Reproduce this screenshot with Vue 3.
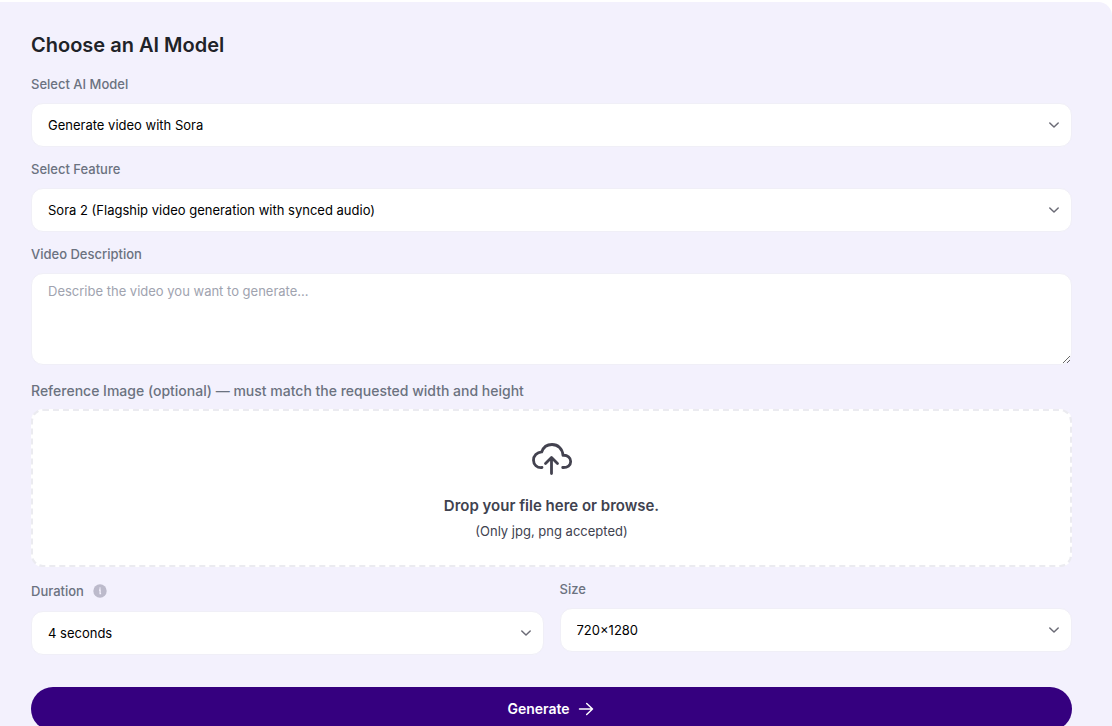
<script setup>
import { ref } from 'vue'

const model = ref('Generate video with Sora')
const feature = ref('Sora 2 (Flagship video generation with synced audio)')
const description = ref('')
const duration = ref('4 seconds')
const size = ref('720×1280')
</script>

<template>
  <main class="panel">
    <h1 class="title">Choose an AI Model</h1>
    <form class="form" @submit.prevent>
      <div class="field">
        <label class="label" for="model">Select AI Model</label>
        <div class="select-wrap">
          <select id="model" v-model="model" class="control">
            <option>Generate video with Sora</option>
          </select>
          <svg class="chevron" viewBox="0 0 12 12" aria-hidden="true"><path d="M1.8 4 6 8 10.2 4" /></svg>
        </div>
      </div>

      <div class="field">
        <label class="label" for="feature">Select Feature</label>
        <div class="select-wrap">
          <select id="feature" v-model="feature" class="control">
            <option>Sora 2 (Flagship video generation with synced audio)</option>
          </select>
          <svg class="chevron" viewBox="0 0 12 12" aria-hidden="true"><path d="M1.8 4 6 8 10.2 4" /></svg>
        </div>
      </div>

      <div class="field">
        <label class="label" for="description">Video Description</label>
        <textarea id="description" v-model="description" class="control area" placeholder="Describe the video you want to generate..."></textarea>
      </div>

      <div class="field upload">
        <label class="label large" for="file">Reference Image (optional) — must match the requested width and height</label>
        <label class="dropzone">
          <input id="file" class="file" type="file" accept=".jpg,.png" />
          <svg class="cloud" viewBox="0 0 42 34" aria-hidden="true">
            <path d="M11 25.500C6 26 2.500 22.600 2.500 18.200c0-4.500 3.300-8 8.200-8.300C12.400 5.200 16.200 2.500 21 2.500c6 0 10.500 4.200 11 10.800 4.500-.3 7.700 2.200 7.700 6.200 0 3.900-3.200 6.200-8 6" />
            <path d="M20.500 31.500V16M14.500 21.500l6-6 6 6" />
          </svg>
          <span class="drop-title">Drop your file here or browse.</span>
          <span class="drop-note">(Only jpg, png accepted)</span>
        </label>
      </div>

      <div class="row">
        <div class="field">
          <div class="label-line">
            <label class="label" for="duration">Duration</label>
            <svg class="info" viewBox="0 0 14 14" role="img" aria-label="Duration information">
              <circle cx="7" cy="7" r="6.700" fill="#bcbacb" />
              <path d="M6 6H7.100V9.700H8.100M7 3.500V4.700" fill="none" stroke="#f3f1fd" stroke-width="1.300" />
            </svg>
          </div>
          <div class="select-wrap">
            <select id="duration" v-model="duration" class="control">
              <option>4 seconds</option>
            </select>
            <svg class="chevron" viewBox="0 0 12 12" aria-hidden="true"><path d="M1.8 4 6 8 10.2 4" /></svg>
          </div>
        </div>
        <div class="field">
          <label class="label" for="size">Size</label>
          <div class="select-wrap">
            <select id="size" v-model="size" class="control">
              <option>720×1280</option>
            </select>
            <svg class="chevron" viewBox="0 0 12 12" aria-hidden="true"><path d="M1.8 4 6 8 10.2 4" /></svg>
          </div>
        </div>
      </div>

      <button class="generate" type="submit">
        Generate
        <svg class="arrow" viewBox="0 0 16 16" aria-hidden="true"><path d="M1.500 8H14.500M8.700 2.500 14.500 8 8.700 13.500" /></svg>
      </button>
    </form>
  </main>
</template>

<style>
body {
  margin: 0;
  background: #fff;
  overflow-x: hidden;
}
</style>

<style scoped>
* {
  box-sizing: border-box;
}

.panel {
  margin-top: 2px;
  padding: 28px 40px 32px 31px;
  background: #f3f1fd;
  border-radius: 0 14px 0 0;
  font-family: Inter, "Liberation Sans", sans-serif;
}

.title {
  margin: 0 0 14px;
  font-size: 20px;
  line-height: 30px;
  font-weight: 600;
  color: #1f2328;
}

.form,
.field {
  display: flex;
  flex-direction: column;
}

.form {
  gap: 12px;
}

.field {
  gap: 9px;
  min-width: 0;
}

.label {
  font-size: 13px;
  line-height: 20px;
  font-weight: 500;
  color: #6b7280;
}

.large {
  font-size: 14px;
}

.select-wrap {
  display: grid;
  align-items: center;
}

.select-wrap > * {
  grid-area: 1 / 1;
}

.control {
  width: 100%;
  height: 44px;
  margin: 0;
  padding: 0 16px;
  border: 1px solid #f0eff7;
  border-radius: 12px;
  background: #fff;
  color: #000;
  font-family: inherit;
  font-size: 13px;
  line-height: 20px;
  appearance: none;
}

.chevron {
  justify-self: end;
  width: 12px;
  height: 12px;
  margin-right: 12px;
  pointer-events: none;
}

.chevron path,
.cloud path,
.arrow path {
  fill: none;
  stroke-linecap: round;
  stroke-linejoin: round;
}

.chevron path {
  stroke: #6b6b76;
  stroke-width: 1.5;
}

.area {
  display: block;
  height: 92px;
  padding: 7px 16px;
  resize: vertical;
}

.area::placeholder {
  color: #a0a3af;
}

.upload {
  gap: 8px;
  margin-top: 4px;
}

.dropzone {
  display: flex;
  flex-direction: column;
  align-items: center;
  padding: 31px 16px 24px;
  border: 2px dashed #ebebf0;
  border-radius: 12px;
  background: #fff;
  color: #40424f;
}

.file {
  position: absolute;
  width: 1px;
  height: 1px;
  opacity: 0;
}

.cloud {
  width: 42px;
  height: 34px;
}

.cloud path {
  stroke: #43424f;
  stroke-width: 2.8;
}

.drop-title {
  margin-top: 18px;
  font-size: 15px;
  line-height: 24px;
  font-weight: 600;
}

.drop-note {
  margin-top: 3px;
  font-size: 13px;
  line-height: 20px;
}

.row {
  display: grid;
  grid-template-columns: 1fr 1fr;
  align-items: start;
  gap: 16px;
}

.label-line {
  display: flex;
  align-items: center;
  gap: 9px;
  height: 23px;
}

.info {
  width: 14px;
  height: 14px;
}

.generate {
  display: flex;
  align-items: center;
  justify-content: center;
  gap: 8px;
  height: 44px;
  margin-top: 20px;
  padding: 0 8px 0 6px;
  border: 0;
  border-radius: 22px;
  background: #35007f;
  color: #fff;
  font-family: inherit;
  font-size: 14px;
  line-height: 20px;
  font-weight: 600;
}

.arrow {
  width: 16px;
  height: 16px;
}

.arrow path {
  stroke: #fff;
  stroke-width: 1.5;
}
</style>
